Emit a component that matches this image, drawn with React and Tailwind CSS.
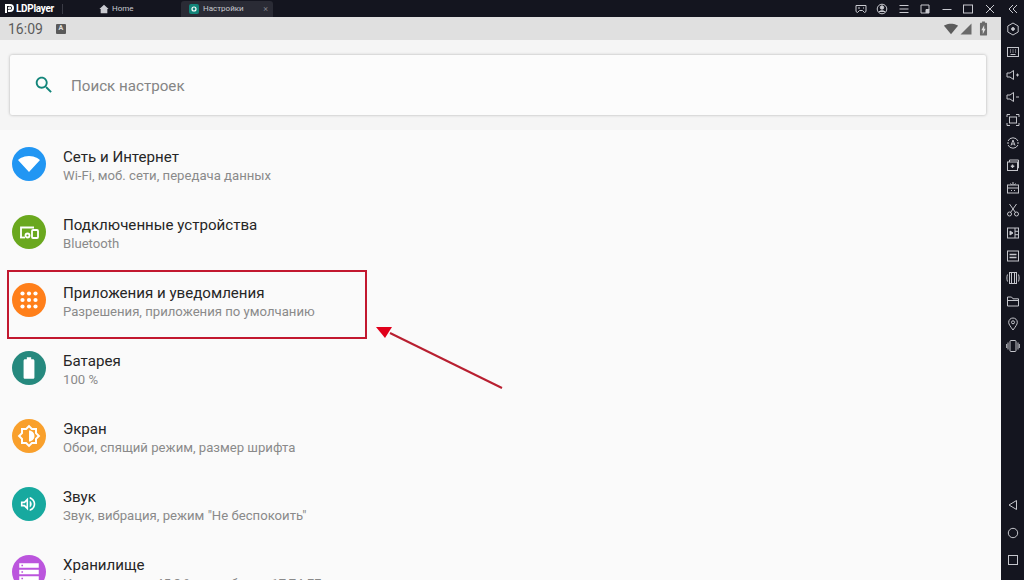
import React from 'react'

const rows = [
  { title: 'Сеть и Интернет', sub: 'Wi-Fi, моб. сети, передача данных', color: 'bg-[#2196f3]', icon: 'wifi' },
  { title: 'Подключенные устройства', sub: 'Bluetooth', color: 'bg-[#6aa81e]', icon: 'devices' },
  { title: 'Приложения и уведомления', sub: 'Разрешения, приложения по умолчанию', color: 'bg-[#ff7f1a]', icon: 'apps' },
  { title: 'Батарея', sub: '100 %', color: 'bg-[#26897e]', icon: 'battery' },
  { title: 'Экран', sub: 'Обои, спящий режим, размер шрифта', color: 'bg-[#f9a02c]', icon: 'display' },
  { title: 'Звук', sub: 'Звук, вибрация, режим "Не беспокоить"', color: 'bg-[#17a99f]', icon: 'sound' },
  { title: 'Хранилище', sub: 'Использовано 45,8 % – свободно 17,74 ГБ', color: 'bg-[#bb55dd]', icon: 'storage' },
]

const RowIcon = ({ name }) => {
  if (name === 'wifi') return (
    <svg viewBox="0 0 24 24" className="w-[24px] h-[24px]" fill="#fff"><path d="M12 20L23 8c-.5-.4-4.6-4-11-4S1.500 7.600 1 8z" /></svg>
  )
  if (name === 'devices') return (
    <svg viewBox="0 0 24 24" className="w-[24px] h-[24px]" fill="none" stroke="#fff" strokeWidth="1.800">
      <path d="M4 17V7.500h13" />
      <path d="M3 17.500h5" />
      <circle cx="10.500" cy="15.500" r="2" />
      <rect x="15" y="10" width="6" height="8" rx="1" />
    </svg>
  )
  if (name === 'apps') return (
    <svg viewBox="0 0 24 24" className="w-[24px] h-[24px]" fill="#fff">
      {[5.500, 12, 18.500].flatMap((y) => [5.500, 12, 18.500].map((x) => <circle key={x + '-' + y} cx={x} cy={y} r="2.100" />))}
    </svg>
  )
  if (name === 'battery') return (
    <svg viewBox="0 0 24 24" className="w-[26px] h-[26px]" fill="#fff"><path d="M15.670 4H14V2h-4v2H8.330C7.600 4 7 4.600 7 5.330v15.340C7 21.400 7.600 22 8.330 22h7.340c.73 0 1.330-.6 1.330-1.330V5.330C17 4.600 16.400 4 15.670 4z" /></svg>
  )
  if (name === 'display') return (
    <svg viewBox="0 0 24 24" className="w-[24px] h-[24px]" fill="#fff"><path d="M20 8.690V4h-4.690L12 .69 8.690 4H4v4.690L.69 12 4 15.310V20h4.690L12 23.310 15.310 20H20v-4.690L23.310 12 20 8.690zm-2 5.790V18h-3.520L12 20.480 9.520 18H6v-3.520L3.520 12 6 9.520V6h3.520L12 3.520 14.480 6H18v3.520L20.480 12 18 14.480zM12 6.500v11c3.030 0 5.500-2.470 5.500-5.500S15.030 6.500 12 6.500z" /></svg>
  )
  if (name === 'sound') return (
    <svg viewBox="0 0 24 24" className="w-[24px] h-[24px]" fill="#fff"><path d="M3 9v6h4l5 5V4L7 9H3zm7-.170v6.340L7.830 13H5v-2h2.830L10 8.830zM16.500 12c0-1.770-1.020-3.290-2.500-4.030v8.050c1.480-.73 2.500-2.250 2.500-4.020zM14 3.230v2.060c2.890.86 5 3.540 5 6.710s-2.110 5.850-5 6.710v2.060c4.010-.91 7-4.490 7-8.770s-2.990-7.860-7-8.770z" transform="translate(1.500 2.400) scale(.8)" /></svg>
  )
  return (
    <svg viewBox="0 0 24 24" className="w-[26px] h-[26px]" fill="#fff">
      <path d="M3 4h18v4H3zM5 5.300v1.400h1.500V5.300zM3 10h18v4H3zM5 11.300v1.400h1.500v-1.400zM3 16h18v4H3zM5 17.300v1.400h1.500v-1.400z" fillRule="evenodd" />
    </svg>
  )
}

const Row = ({ title, sub, color, icon }) => (
  <div className="h-[68px] flex items-center pl-[12px]">
    <div className={`w-[34px] h-[34px] rounded-full flex items-center justify-center shrink-0 ${color}`}>
      <RowIcon name={icon} />
    </div>
    <div className="ml-[17px] pt-[3px] flex flex-col whitespace-nowrap">
      <span className="text-[15.100px] leading-[20px] text-[#262626]">{title}</span>
      <span className="text-[13.150px] leading-[18px] text-[#8a8a8a]">{sub}</span>
    </div>
  </div>
)

const TopIcon = ({ children }) => (
  <svg viewBox="0 0 12 12" className="w-[12px] h-[12px]" fill="none" stroke="#c9cad0" strokeWidth="1">{children}</svg>
)

const SideIcon = ({ children }) => (
  <div className="h-[22.650px] flex items-center justify-center shrink-0">
    <svg viewBox="0 0 14 14" className="w-[14px] h-[14px]" fill="none" stroke="#c4c5cb" strokeWidth="1">{children}</svg>
  </div>
)

const sideIcons = [
  <><path d="M7 1l5.200 3v6L7 13l-5.200-3V4z" /><circle cx="7" cy="7" r="1.400" fill="#c4c5cb" /></>,
  <><rect x="1.500" y="2.500" width="11" height="9" /><path d="M4 5h1M6.500 5h1M9 5h1M4 7h1M6.500 7h1M9 7h1M4.500 9.500h5" /></>,
  <><path d="M1 5h3l3.500-2.500v9L4 9H1z" /><path d="M10 7h3M11.500 5.500v3" /></>,
  <><path d="M1 5h3l3.500-2.500v9L4 9H1z" /><path d="M10 7h3" /></>,
  <><path d="M1 4V1.500h3M10 1.500h3V4M13 10v2.500h-3M4 12.500H1V10" /><rect x="3.500" y="4" width="7" height="6" /></>,
  <><path d="M2 5a5.500 5.500 0 0 1 10 0M12 9a5.500 5.500 0 0 1-10 0" /><path d="M5 9.500L7 4l2 5.500M5.700 8h2.600" /><path d="M1 7h2M11 7h2" /></>,
  <><rect x="1.500" y="4" width="10" height="8.500" /><path d="M3.500 4V2h9v8h-1" /><path d="M6.500 6.500v3.500M4.800 8.200h3.500" strokeWidth="1.400" /></>,
  <><rect x="1.500" y="4" width="11" height="8" /><path d="M1.500 7h11M4.500 2.500L5.500 4M9.500 2.500L8.500 4M7 1v3M5 9.500h1M8 9.500h1" /></>,
  <><circle cx="3.500" cy="11" r="2" /><circle cx="10.500" cy="11" r="2" /><path d="M4.500 9.500L10.500 1M9.500 9.500L3.500 1" /></>,
  <><rect x="1.500" y="2" width="11" height="10" /><path d="M9 2v10M9 5.300h3.500M9 8.700h3.500" /><path d="M4 5l3 2-3 2z" fill="#c4c5cb" /></>,
  <><rect x="1.500" y="2" width="11" height="10" /><path d="M3.500 5.500h7M3.500 8.500h7" strokeWidth="1.400" /></>,
  <><rect x="3.500" y="1.500" width="7" height="11" /><path d="M1.500 3.500c-.8 2-.8 5 0 7M12.500 3.500c.8 2 .8 5 0 7" /><path d="M5.500 1.500v11M8.500 1.500v11" /></>,
  <><path d="M1.500 3h4l1.500 1.800h5.500V12h-11z" /><path d="M1.500 6.500h11" /></>,
  <><path d="M7 13C4.500 9.500 2.700 7.500 2.700 5.300a4.300 4.300 0 0 1 8.600 0C11.300 7.500 9.500 9.500 7 13z" /><circle cx="7" cy="5.300" r="1.500" /></>,
  <><rect x="4" y="1.500" width="6" height="11" rx="1" /><path d="M2 3.500v7M12 3.500v7M.7 5v4M13.300 5v4" /></>,
]

export default function App() {
  return (
    <div className="w-[1024px] h-[580px] overflow-hidden flex flex-col bg-[#14151f] font-['Roboto',sans-serif]">
      {/* title bar */}
      <div className="h-[17px] flex items-stretch shrink-0 bg-[#14151f] text-[#c9cad0] text-[8px]">
        <div className="w-[62px] flex items-center pl-[3px]">
          <svg viewBox="0 0 12 12" className="w-[12px] h-[12px]" fill="none" stroke="#fff" strokeWidth="2">
            <path d="M3 10V2h4a3 3 0 0 1 0 6H5" />
            <circle cx="6.500" cy="5" r=".6" fill="#fff" />
          </svg>
          <span className="ml-[1px] text-[10px] font-bold text-white tracking-[-0.300px]">LDPlayer</span>
        </div>
        <div className="w-[1px] h-[10px] self-center bg-[#3a3b45]" />
        <div className="w-[118px] flex items-center pl-[36px]">
          <svg viewBox="0 0 12 12" className="w-[10px] h-[10px]" fill="#c9cad0"><path d="M6 1L.5 6H2v5h8V6h1.500z" /></svg>
          <span className="ml-[3px]">Home</span>
        </div>
        <div className="w-[92px] flex items-center pl-[8px] bg-[#2a2b35] rounded-t-[3px] mt-[1px]">
          <div className="w-[10px] h-[10px] rounded-[2px] bg-[#12857a] flex items-center justify-center">
            <svg viewBox="0 0 10 10" className="w-[8px] h-[8px]" fill="none" stroke="#fff" strokeWidth="1.500"><circle cx="5" cy="5" r="2.500" /></svg>
          </div>
          <span className="ml-[4px]">Настройки</span>
          <span className="ml-auto mr-[5px] text-[#7d7e86] text-[9px] leading-none">×</span>
        </div>
        <div className="flex-1 flex items-center justify-end pr-[5px]">
          <div className="flex items-center gap-[9.450px]">
            <TopIcon><path d="M1 2.500h10v6l-1.500 1-2-2h-3l-2 2-1.500-1z" /><path d="M3 5h2M8 5h1" /></TopIcon>
            <TopIcon><circle cx="6" cy="6" r="4.800" /><circle cx="6" cy="4.500" r="1.700" fill="#c9cad0" /><path d="M2.800 9c1-1.600 5.400-1.600 6.400 0" fill="#c9cad0" /></TopIcon>
            <TopIcon><path d="M1.500 2.500h9M1.500 6h9M1.500 9.500h9" /></TopIcon>
            <TopIcon><path d="M7 10H2V2h8v5" /><path d="M7 6.500h3v3.500H7z" fill="#c9cad0" /></TopIcon>
            <TopIcon><path d="M1.500 6.500h9" /></TopIcon>
            <TopIcon><rect x="1.500" y="2" width="9" height="8" /></TopIcon>
            <TopIcon><path d="M2 2l8 8M10 2l-8 8" /></TopIcon>
            <div className="ml-[2px] flex">
              <TopIcon><path d="M6 2L2 6l4 4M10 2L6 6l4 4" /></TopIcon>
            </div>
          </div>
        </div>
      </div>

      <div className="flex-1 flex min-h-0">
        <div className="relative flex-1 min-w-0 flex flex-col bg-[#fafafa]">
          {/* android status bar */}
          <div className="h-[23px] shrink-0 bg-[#e0e0e0] flex items-center pl-[8px] pr-[9px] text-[#5c5c5c]">
            <span className="text-[14px] pt-[1px]">16:09</span>
            <div className="ml-[13px] w-[10px] h-[10px] rounded-[1px] bg-[#5a5a5a] flex items-center justify-center text-[7px] font-bold text-[#e0e0e0]">A</div>
            <div className="ml-auto flex items-center">
              <svg viewBox="0 0 24 24" className="w-[14px] h-[14px]" fill="#5c5c5c"><path d="M12 21L24 6.500C23.500 6 19 3 12 3S.5 6 0 6.500z" /></svg>
              <svg viewBox="0 0 24 24" className="w-[12px] h-[12px] ml-[2px]" fill="#6a6a6a"><path d="M1 23h22V1z" /></svg>
              <svg viewBox="0 0 24 24" className="w-[17px] h-[17px] ml-[3px]" fill="#6a6a6a">
                <path d="M15.670 4H14V2h-4v2H8.330C7.600 4 7 4.600 7 5.330v15.340C7 21.400 7.600 22 8.330 22h7.340c.73 0 1.330-.6 1.330-1.330V5.330C17 4.600 16.400 4 15.670 4z" />
                <path d="M11 20v-5.500H9L13 7v5.500h2L11 20z" fill="#e0e0e0" />
              </svg>
            </div>
          </div>

          {/* search */}
          <div className="h-[90px] shrink-0 bg-[#f5f5f5] pt-[15px] pl-[10px] pr-[15px]">
            <div className="h-[60px] bg-[#fcfcfc] rounded-[2px] shadow-[0_0_3px_rgba(0,0,0,0.3)] flex items-center pl-[23px]">
              <svg viewBox="0 0 24 24" className="w-[22px] h-[22px]" fill="#12857a"><path d="M15.500 14h-.79l-.28-.27C15.410 12.590 16 11.110 16 9.500 16 5.910 13.090 3 9.500 3S3 5.910 3 9.500 5.910 16 9.500 16c1.610 0 3.090-.59 4.230-1.570l.27.28v.79l5 4.990L20.490 19l-4.990-5zm-6 0C7.010 14 5 11.990 5 9.500S7.010 5 9.500 5 14 7.010 14 9.500 11.990 14 9.500 14z" /></svg>
              <span className="ml-[16px] pt-[2px] text-[15.150px] text-[#858585]">Поиск настроек</span>
            </div>
          </div>

          {/* list */}
          <div className="flex-1 min-h-0 overflow-hidden">
            {rows.map((r) => <Row key={r.title} {...r} />)}
          </div>

          {/* annotation */}
          <div className="absolute left-[7px] top-[253px] w-[360px] h-[69px] border-2 border-[#c2182f]" />
          <svg viewBox="0 0 140 80" className="absolute left-[370px] top-[305px] w-[140px] h-[80px]" fill="none">
            <path d="M132 66L20 11" stroke="#b81f30" strokeWidth="2" />
            <path d="M6 5L22 5L15 16z" fill="#e0001b" />
          </svg>
        </div>

        {/* side toolbar */}
        <div className="w-[23px] shrink-0 bg-[#14151f] flex flex-col pt-[1px] pb-[14px]">
          {sideIcons.map((ic, i) => <SideIcon key={i}>{ic}</SideIcon>)}
          <div className="mt-auto flex flex-col items-center gap-[15.500px]">
            <svg viewBox="0 0 12 12" className="w-[12px] h-[12px]" fill="none" stroke="#c4c5cb"><path d="M9.500 1.500v9L2 6z" /></svg>
            <svg viewBox="0 0 12 12" className="w-[12px] h-[12px]" fill="none" stroke="#c4c5cb"><circle cx="6" cy="6" r="4.700" /></svg>
            <svg viewBox="0 0 12 12" className="w-[12px] h-[12px]" fill="none" stroke="#c4c5cb"><rect x="1.500" y="1.500" width="9" height="9" /></svg>
          </div>
        </div>
      </div>
    </div>
  )
}
